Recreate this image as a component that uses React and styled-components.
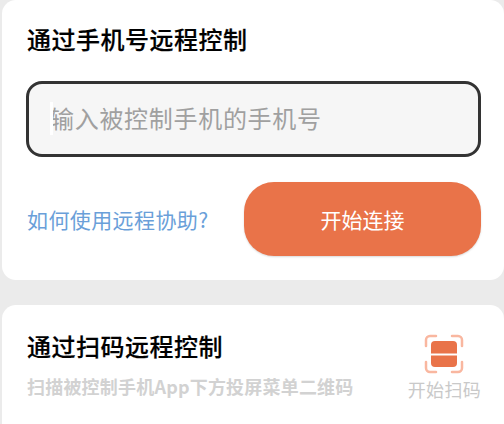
import React from "react";
import styled, { createGlobalStyle } from "styled-components";

const GlobalStyle = createGlobalStyle`
  html, body {
    margin: 0;
    height: 424px;
    overflow: hidden;
    background: #ebebeb;
    font-family: "Noto Sans CJK SC", "Noto Sans", sans-serif;
  }
`;

const Page = styled.div`
  display: flex;
  flex-direction: column;
  gap: 25px;
  padding-left: 2px;
  height: 424px;
  overflow: hidden;
`;

const Card = styled.section`
  flex: none;
  box-sizing: border-box;
  background: #fff;
  border-radius: 14px;
  height: ${(props) => props.$height}px;
  padding: ${(props) => props.$top}px 23px 0 25px;
`;

const Title = styled.h2`
  margin: 0;
  font-size: 24px;
  letter-spacing: 0.5px;
  line-height: 34px;
  font-weight: 500;
  -webkit-text-stroke: 0.2px #000;
  color: #000;
`;

const InputWrap = styled.div`
  position: relative;
  margin: 25px 0 0 -1px;
`;

const PhoneInput = styled.input`
  display: block;
  box-sizing: border-box;
  width: 100%;
  height: 76px;
  padding: 0 22px 3px 21px;
  background: #f6f6f6;
  border: 3px solid #333;
  border-radius: 16px;
  outline: none;
  font: inherit;
  font-size: 24px;
  letter-spacing: 0.7px;
  &::placeholder {
    color: #a0a0a0;
    opacity: 1;
  }
`;

const Caret = styled.span`
  position: absolute;
  left: 24px;
  top: 21px;
  width: 3px;
  height: 33px;
  background: #fff;
`;

const ActionRow = styled.div`
  display: flex;
  align-items: center;
  justify-content: space-between;
  margin-top: 25px;
`;

const HelpLink = styled.a`
  font-size: 21px;
  letter-spacing: 0.4px;
  color: #6a9fd9;
`;

const ConnectButton = styled.button`
  width: 237px;
  height: 74px;
  border: none;
  border-radius: 30px;
  background: #e97349;
  box-shadow: 0 1px 2px rgba(0, 0, 0, 0.15);
  color: #fff;
  font: inherit;
  font-size: 21px;
`;

const ScanRow = styled.div`
  display: flex;
  justify-content: space-between;
`;

const ScanText = styled.div`
  display: flex;
  flex-direction: column;
  gap: 10px;
`;

const Hint = styled.p`
  margin: 0;
  font-size: 18px;
  letter-spacing: 0.2px;
  line-height: 26px;
  font-weight: 700;
  color: #d2d2d2;
`;

const ScanAction = styled.div`
  display: flex;
  flex-direction: column;
  align-items: center;
  gap: 2px;
  margin-top: 5px;
`;

const ScanLabel = styled.span`
  font-size: 18px;
  letter-spacing: 0.3px;
  line-height: 26px;
  color: #c9c9c9;
`;

const ScanIcon = () => (
  <svg width="40" height="40" viewBox="0 0 40 40" fill="none">
    <path
      d="M2 12V6a4 4 0 0 1 4-4h6M28 2h6a4 4 0 0 1 4 4v6M38 28v6a4 4 0 0 1-4 4h-6M12 38H6a4 4 0 0 1-4-4v-6"
      stroke="#f9b7a0"
      strokeWidth="2.5"
      strokeLinecap="round"
    />
    <path d="M7 19.5V11a4 4 0 0 1 4-4h18a4 4 0 0 1 4 4v8.5z" fill="#e97349" />
    <path d="M7 21.5h26V29a4 4 0 0 1-4 4H11a4 4 0 0 1-4-4z" fill="#e97349" />
  </svg>
);

export default function App() {
  return (
    <>
      <GlobalStyle />
      <Page>
        <Card $height={280} $top={22}>
          <Title>通过手机号远程控制</Title>
          <InputWrap>
            <PhoneInput placeholder="输入被控制手机的手机号" readOnly />
            <Caret />
          </InputWrap>
          <ActionRow>
            <HelpLink>如何使用远程协助?</HelpLink>
            <ConnectButton>开始连接</ConnectButton>
          </ActionRow>
        </Card>
        <Card $height={140} $top={24}>
          <ScanRow>
            <ScanText>
              <Title>通过扫码远程控制</Title>
              <Hint>扫描被控制手机App下方投屏菜单二维码</Hint>
            </ScanText>
            <ScanAction>
              <ScanIcon />
              <ScanLabel>开始扫码</ScanLabel>
            </ScanAction>
          </ScanRow>
        </Card>
      </Page>
    </>
  );
}
